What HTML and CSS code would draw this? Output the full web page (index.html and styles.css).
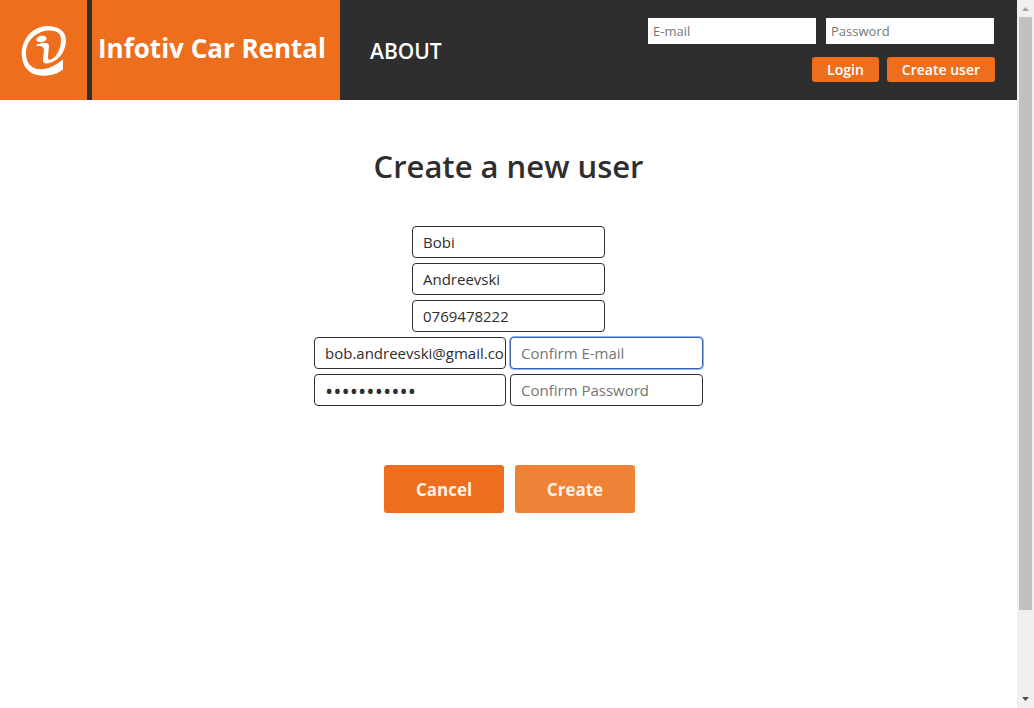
FILE: index.html
```html
<!DOCTYPE html>
<html lang="en">
<head>
<meta charset="utf-8">
<title>Infotiv Car Rental</title>
<link rel="stylesheet" href="styles.css">
</head>
<body>
<div class="page">
  <header class="header">
    <a class="logo" href="#" aria-label="Home">
      <svg viewBox="0 0 46 51" width="46" height="51" aria-hidden="true">
        <path fill="#fff" d="M42 33.500V43.500C36 48.500 26 51 16 49C6 47 0.500 38 0.700 27C1.500 12 12 0.500 26 0C37 0 45 5 45 14C45 25 38 34 30 36.500C25 38.500 21.500 38 22 33L23 24C23 21 21 20 15 19.500L15.500 18.500C19 17.500 24 16.500 26.500 17.500C28.500 18.500 28 21 27.500 25L27 31C27 34 28.500 34.500 31 33C37 29.500 40 21 40 13.500C40 7 35 4 27 4.500C14 5.500 5 16 5 27C5 36 9 42 17 43C26 44 34 40 42 33.500Z"/>
        <ellipse cx="20.500" cy="13" rx="5.200" ry="3.200" transform="rotate(-10 20.500 13)" fill="#fff"/>
      </svg>
    </a>
    <h1 class="title">Infotiv Car Rental</h1>
    <nav class="nav"><a class="about" href="#">ABOUT</a></nav>
    <form class="login">
      <div class="login-fields">
        <input class="login-input" type="email" placeholder="E-mail" aria-label="E-mail">
        <input class="login-input" type="password" placeholder="Password" aria-label="Password">
      </div>
      <div class="login-actions">
        <button class="small-button" type="button">Login</button>
        <button class="small-button" type="button">Create user</button>
      </div>
    </form>
  </header>
  <main class="main">
    <h2 class="heading">Create a new user</h2>
    <form class="user-form">
      <input class="field" type="text" value="Bobi" aria-label="First name">
      <input class="field" type="text" value="Andreevski" aria-label="Last name">
      <input class="field" type="text" value="0769478222" aria-label="Phone number">
      <div class="pair">
        <input class="field" type="text" value="bob.andreevski@gmail.com" aria-label="E-mail">
        <input class="field field-active" type="email" placeholder="Confirm E-mail" aria-label="Confirm E-mail">
      </div>
      <div class="pair">
        <input class="field field-secret" type="password" value="password123" aria-label="Password">
        <input class="field" type="password" placeholder="Confirm Password" aria-label="Confirm Password">
      </div>
      <div class="actions">
        <button class="button" type="button">Cancel</button>
        <button class="button button-hover" type="button">Create</button>
      </div>
    </form>
  </main>
</div>
<div class="scrollbar" aria-hidden="true">
  <svg class="arrow" viewBox="0 0 17 17" width="17" height="17"><path fill="#a3a3a3" d="M5 11L8.500 7L12 11Z"/></svg>
  <div class="track"><div class="thumb"></div></div>
  <svg class="arrow" viewBox="0 0 17 17" width="17" height="17"><path fill="#505050" d="M5 6H12L8.500 10Z"/></svg>
</div>
</body>
</html>
```
FILE: styles.css
```css
* {
  box-sizing: border-box;
}

body {
  margin: 0;
  display: flex;
  min-height: 100vh;
  background: #fff;
  color: #2e2e2e;
  font-family: "Trebuchet MS", "Open Sans", sans-serif;
}

input,
button {
  font-family: inherit;
  margin: 0;
}

.page {
  flex: 1;
  min-width: 0;
}

.header {
  display: flex;
  height: 100px;
  background: #2e2e2e;
  color: #fff;
}

.logo {
  display: flex;
  align-items: center;
  justify-content: center;
  width: 87px;
  margin-right: 5px;
  padding-top: 2px;
  background: #ed6f1d;
}

.title {
  margin: 0;
  width: 248px;
  padding: 30px 6px 0;
  background: #ed6f1d;
  font-size: 26px;
  line-height: 36px;
  font-weight: 700;
  white-space: nowrap;
}

.nav {
  padding: 36px 30px 0;
}

.about {
  color: #fff;
  font-size: 21px;
  line-height: 30px;
  font-weight: 600;
  text-decoration: none;
}

.login {
  display: flex;
  flex-direction: column;
  align-items: flex-end;
  gap: 13px;
  margin-left: auto;
  padding: 18px 22px 0 0;
}

.login-fields {
  display: flex;
  gap: 10px;
  padding-right: 1px;
}

.login-input {
  width: 168px;
  height: 26px;
  padding: 0 5px;
  border: 0;
  font-size: 13px;
}

.login-actions {
  display: flex;
  gap: 8px;
}

.small-button {
  height: 25px;
  padding: 0 15px;
  border: 0;
  border-radius: 3px;
  background: #ed6f1d;
  color: #fff;
  font-size: 14px;
  font-weight: 600;
}

.main {
  padding: 46px 0 0;
}

.heading {
  margin: 0;
  font-size: 31px;
  line-height: 40px;
  font-weight: 600;
  text-align: center;
}

.user-form {
  display: flex;
  flex-direction: column;
  align-items: center;
  gap: 5px;
  margin-top: 40px;
}

.pair {
  display: flex;
  gap: 4px;
}

.field {
  width: 193px;
  height: 32px;
  padding: 0 0 0 10px;
  border: 1px solid #2e2e2e;
  border-radius: 4px;
  background: #fff;
  color: #2e2e2e;
  font-size: 15px;
}

.pair .field:first-child {
  width: 192px;
}

.field.field-secret {
  font-size: 22px;
}

.field::placeholder,
.login-input::placeholder {
  color: #757575;
}

.field-active {
  border-color: #3a62ad;
  box-shadow: 0 0 0 1px #8fb4f5;
}

.actions {
  display: flex;
  gap: 11px;
  margin-top: 54px;
  padding-left: 2px;
}

.button {
  width: 120px;
  height: 48px;
  border: 0;
  border-radius: 3px;
  background: #ed6f1d;
  color: #fff1e8;
  font-size: 17px;
  font-weight: 700;
}

.button-hover {
  background: #ef8236;
}

.scrollbar {
  display: flex;
  flex-direction: column;
  width: 17px;
  height: 100vh;
  background: #f0f0f0;
}

.arrow {
  display: block;
}

.track {
  flex: 1;
  padding: 0 2px;
}

.thumb {
  height: 88%;
  background: #c1c1c1;
}
```
